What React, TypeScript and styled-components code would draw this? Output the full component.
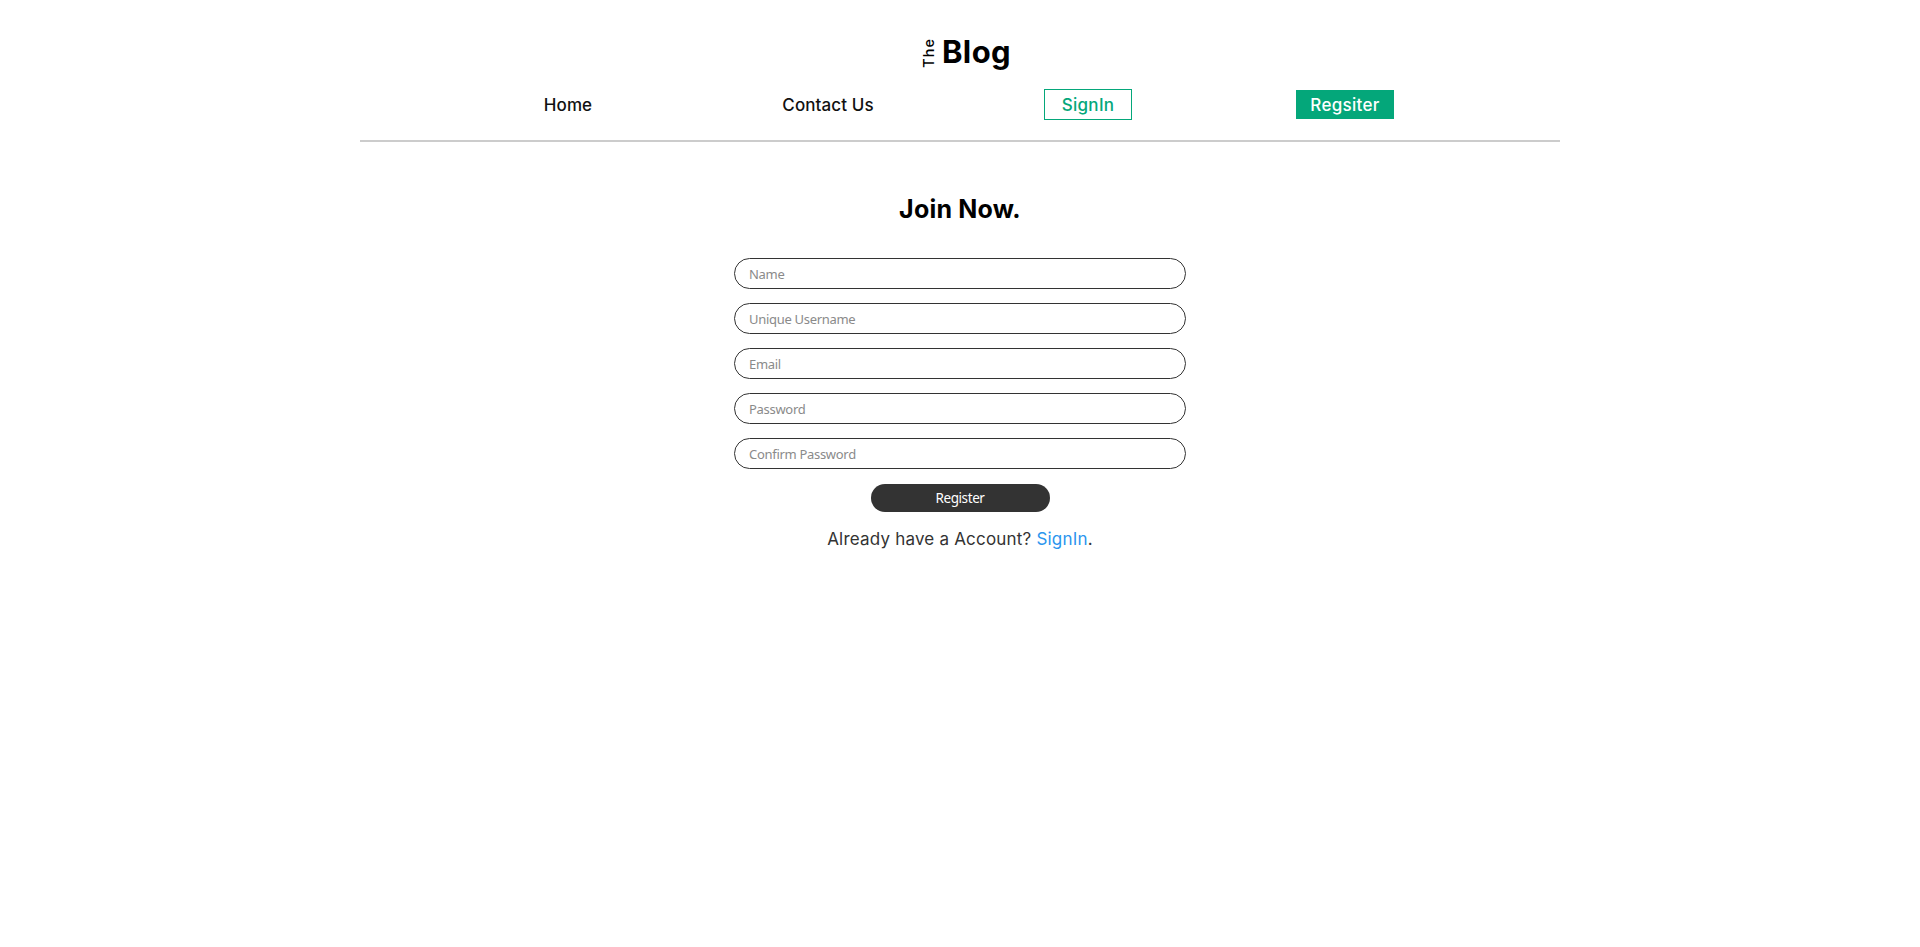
import React from "react";
import styled, { createGlobalStyle } from "styled-components";

const Global = createGlobalStyle`
  html, body { margin: 0; padding: 0; background: #fff; }
  body { font-family: "Inter", "Liberation Sans", sans-serif; color: #000; }
  * { box-sizing: border-box; }
`;

const Page = styled.div`
  display: flex;
  flex-direction: column;
  align-items: center;
  min-height: 947px;
`;

const Header = styled.header`
  width: 1200px;
  border-bottom: 2px solid #cccccc;
  display: flex;
  flex-direction: column;
  align-items: center;
  padding-top: 34px;
  padding-bottom: 21px;
`;

const Logo = styled.a`
  display: flex;
  align-items: flex-end;
  text-decoration: none;
  color: #000;
  margin-left: 15px;
`;

const LogoThe = styled.span`
  writing-mode: vertical-rl;
  transform: rotate(180deg);
  font-size: 14.5px;
  font-weight: 500;
  line-height: 10px;
  letter-spacing: 1px;
  margin-right: 8px;
  margin-bottom: 2px;
`;

const LogoBlog = styled.span`
  font-size: 31px;
  font-weight: 700;
  line-height: 36px;
  letter-spacing: 0.4px;
`;

const Nav = styled.nav`
  margin-top: 19px;
  display: grid;
  grid-template-columns: repeat(4, 260px);
  align-items: center;
  justify-items: center;
  height: 30px;
  margin-left: -4px;
`;

const NavLink = styled.a`
  font-size: 17px;
  font-weight: 500;
  color: #111;
  text-decoration: none;
  letter-spacing: 0.1px;
`;

const NavButton = styled.a<{ $filled?: boolean }>`
  display: flex;
  align-items: center;
  justify-content: center;
  font-size: 17px;
  font-weight: 500;
  text-decoration: none;
  letter-spacing: 0.3px;
  height: ${(p) => (p.$filled ? "29px" : "31px")};
  padding: 0 ${(p) => (p.$filled ? "13px" : "17px")};
  border: 1px solid #04a77a;
  color: ${(p) => (p.$filled ? "#fff" : "#04a77a")};
  background: ${(p) => (p.$filled ? "#04a77a" : "#fff")};
  margin-right: ${(p) => (p.$filled ? "6px" : "0")};
`;

const Main = styled.main`
  display: flex;
  flex-direction: column;
  align-items: center;
  padding-top: 49px;
`;

const Title = styled.h1`
  margin: 0;
  font-size: 25px;
  font-weight: 700;
  line-height: 36px;
  letter-spacing: 0.2px;
`;

const Form = styled.form`
  margin-top: 31px;
  width: 452px;
  display: flex;
  flex-direction: column;
  align-items: center;
  gap: 14px;
`;

const Input = styled.input`
  width: 100%;
  height: 31px;
  border: 1px solid #333;
  border-radius: 16px;
  padding: 0 14px;
  font-family: "Noto Sans", "Open Sans", sans-serif;
  font-size: 13px;
  letter-spacing: -0.3px;
  color: #333;
  outline: none;
  background: #fff;
  &::placeholder { color: #8a8a8a; }
`;

const SubmitButton = styled.button`
  margin-top: 1px;
  width: 179px;
  height: 28px;
  border: none;
  border-radius: 14px;
  background: #333333;
  color: #fff;
  font-family: "Noto Sans", "Open Sans", sans-serif;
  font-size: 13.5px;
  letter-spacing: -0.4px;
  cursor: pointer;
`;

const Already = styled.p`
  margin: 17px 0 0;
  font-size: 17px;
  color: #333;
  letter-spacing: 0.2px;
`;

const BlueLink = styled.a`
  color: #2b95ee;
  text-decoration: none;
`;

export default function App() {
  return (
    <>
      <Global />
      <Page>
        <Header>
          <Logo href="#">
            <LogoThe>The</LogoThe>
            <LogoBlog>Blog</LogoBlog>
          </Logo>
          <Nav>
            <NavLink href="#">Home</NavLink>
            <NavLink href="#">Contact Us</NavLink>
            <NavButton href="#">SignIn</NavButton>
            <NavButton href="#" $filled>Regsiter</NavButton>
          </Nav>
        </Header>
        <Main>
          <Title>Join Now.</Title>
          <Form onSubmit={(e) => e.preventDefault()}>
            <Input placeholder="Name" />
            <Input placeholder="Unique Username" />
            <Input placeholder="Email" />
            <Input type="password" placeholder="Password" />
            <Input type="password" placeholder="Confirm Password" />
            <SubmitButton type="submit">Register</SubmitButton>
          </Form>
          <Already>
            Already have a Account? <BlueLink href="#">SignIn</BlueLink>.
          </Already>
        </Main>
      </Page>
    </>
  );
}
